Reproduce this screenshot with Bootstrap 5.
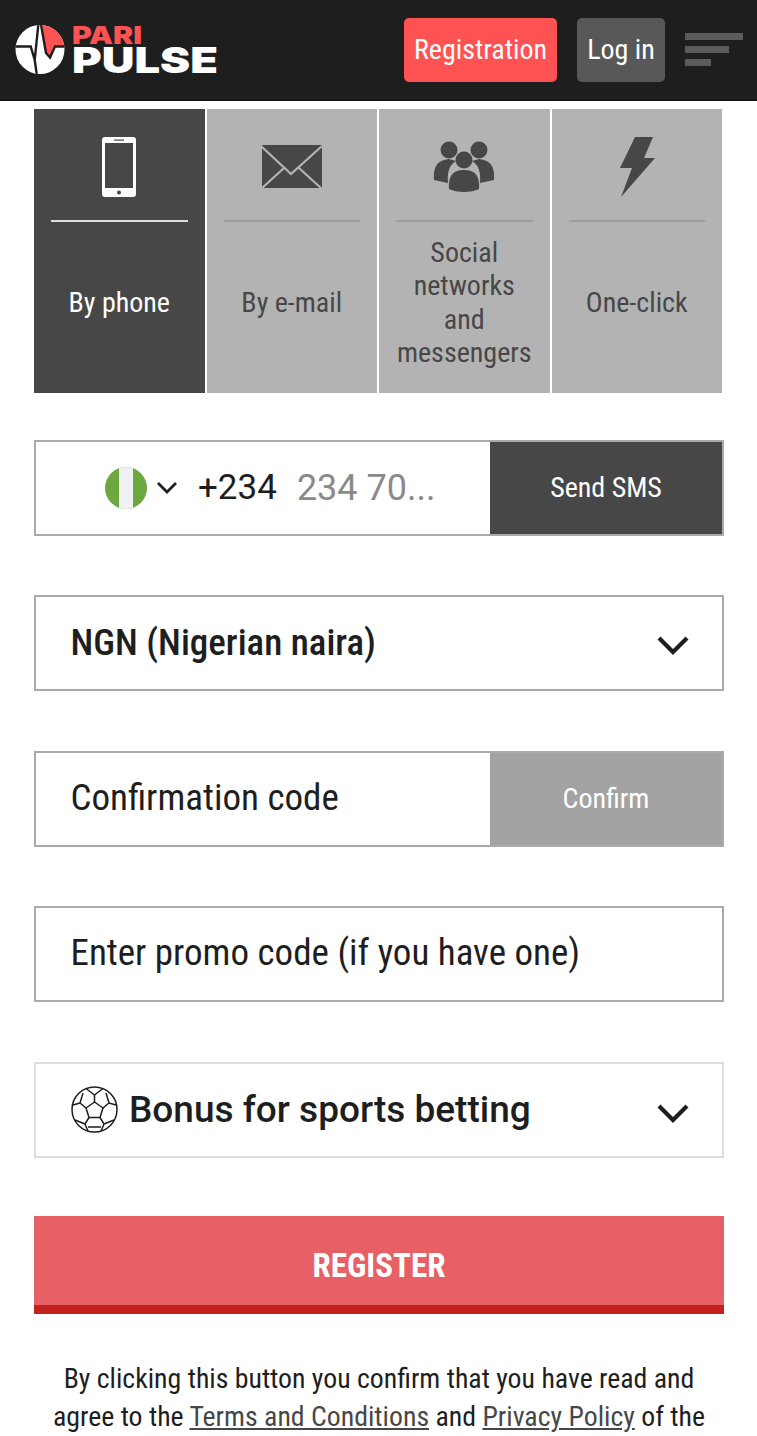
<!DOCTYPE html>
<html lang="en">
<head>
    <meta charset="UTF-8">
    <meta name="viewport" content="width=device-width, initial-scale=1.0">
    <title>PariPulse registration</title>
    <link href="https://cdn.jsdelivr.net/npm/bootstrap@5.3.0/dist/css/bootstrap.min.css" rel="stylesheet">
    <style>
        html, body {
            height: 1436px;
            overflow: hidden;
        }
        body {
            font-family: Roboto, "Liberation Sans", sans-serif;
            font-stretch: 75%;
            color: #1e1e1e;
            background: #fff;
        }
        button { font-stretch: 75%; }
        .top-bar {
            height: 101px;
            background: #1e1e1e;
            border-bottom: 2px solid #151515;
            padding: 0 14px 0 14px;
        }
        .btn-reg, .btn-login {
            height: 64px;
            border-radius: 5px;
            color: #fff;
            font-size: 28px;
            padding: 0;
            border: 0;
        }
        .btn-reg { width: 153px; background: #ff5252; }
        .btn-login { width: 88px; background: #585858; margin-left: 20px; }
        .btn-reg:hover { background: #ff5252; color: #fff; }
        .btn-login:hover { background: #585858; color: #fff; }
        .burger { width: 58px; margin: 0 0 0 20px; gap: 6px; }
        .burger span { display: block; height: 7px; background: #5b5b5b; }
        .burger .short-bar { width: 26px; }
        .reg-form { padding: 8px 33px 0 34px; }
        .tabs { gap: 2px; height: 284px; margin-right: 2px; }
        .tab-item {
            flex: 1 1 0;
            background: #b3b3b3;
            color: #474747;
            padding: 0 17px;
            font-size: 28px;
            line-height: 33.5px;
        }
        .tab-item.active-tab { background: #474747; color: #fff; }
        .tab-icon {
            height: 113px;
            padding-top: 5px;
            border-bottom: 2px solid #9c9c9c;
            flex: none;
        }
        .active-tab .tab-icon { border-bottom-color: #ddd; }
        .tab-label { flex: 1; padding-bottom: 10px; }
        .field {
            height: 96px;
            border: 2px solid #aaa;
            margin-top: 59.3px;
            font-size: 37px;
        }
        .field-text { padding-left: 34.5px; flex: 1; padding-bottom: 2px; }
        .field-btn {
            width: 232px;
            height: 100%;
            color: #fff;
            font-size: 28px;
            border-radius: 0;
            border: 0;
        }
        .dark-btn, .dark-btn:hover { background: #474747; color: #fff; }
        .gray-btn, .gray-btn:hover { background: #a3a3a3; color: #fff; }
        .phone-field { margin-top: 47px; }
        .phone-left { flex: 1; padding-left: 69px; }
        .flag { width: 42px; height: 42px; flex: none; }
        .dial { font-size: 35px; margin-left: 19px; font-stretch: 100%; }
        .phone-hint { font-size: 36px; color: #8a8a8a; margin-left: 20px; font-stretch: 100%; }
        .chev-big { margin-right: 33px; margin-top: 4px; }
        .strong-text { font-weight: 500; }
        .bonus-field { border-color: #ddd; font-weight: 500; font-stretch: 100%; margin-top: 60px; }
        .bonus-field .field-text { padding-left: 35px; gap: 11px; padding-bottom: 0; }
        .bonus-field .chev-big { margin-top: 7px; }
        .btn-register {
            display: block;
            width: 100%;
            height: 98px;
            margin-top: 58px;
            padding-top: 11px;
            background: #e66065;
            border: 0;
            border-bottom: 9px solid #c4201c;
            border-radius: 0;
            color: #fff;
            font-size: 33px;
            font-weight: 700;
        }
        .legal {
            margin: 46px 0 0;
            text-align: center;
            font-size: 27.8px;
            line-height: 38px;
        }
        .legal a { color: #474747; }
    </style>
</head>
<body>
    <!-- Header -->
    <nav class="top-bar d-flex align-items-center">
        <svg width="210" height="66" viewBox="0 -3 210 66" class="flex-shrink-0">
            <defs><clipPath id="logoClip"><circle cx="26" cy="29.5" r="24.5"/></clipPath></defs>
            <g clip-path="url(#logoClip)">
                <rect width="52" height="60" fill="#fff"/>
                <path d="M27 0 H60 V26.5 H41 L36 37.5 L32 33 Z" fill="#ff5252"/>
                <path d="M0 26.5 H16.7 L20.7 40 L24.5 3 M20.7 40 L23 56" fill="none" stroke="#1e1e1e" stroke-width="2.4"/>
                <path d="M26.7 3 L32 33 L36 37.5 L41 26.5 H60" fill="none" stroke="#1e1e1e" stroke-width="2.4"/>
            </g>
            <text x="58" y="24" font-family="Inter, sans-serif" font-weight="900" font-size="24" fill="#ff5252" textLength="70" lengthAdjust="spacingAndGlyphs">PARI</text>
            <text x="58" y="53" font-family="Inter, sans-serif" font-weight="900" font-size="36" fill="#fff" textLength="146" lengthAdjust="spacingAndGlyphs">PULSE</text>
        </svg>
        <div class="ms-auto d-flex align-items-center">
            <button class="btn btn-reg">Registration</button>
            <button class="btn btn-login">Log in</button>
            <div class="burger d-flex flex-column">
                <span class="w-100"></span>
                <span class="w-75"></span>
                <span class="short-bar"></span>
            </div>
        </div>
    </nav>

    <div class="reg-form">
        <!-- Registration types -->
        <div class="tabs d-flex">
            <div class="tab-item active-tab d-flex flex-column text-center">
                <div class="tab-icon d-flex align-items-center justify-content-center">
                    <svg width="36" height="62" viewBox="0 0 36 62">
                        <rect x="1" y="1" width="34" height="60" rx="3" fill="#fff"/>
                        <rect x="4" y="7" width="28" height="45" fill="#474747"/>
                        <rect x="13" y="3.5" width="10" height="1.2" fill="#474747"/>
                        <circle cx="18" cy="56.5" r="2" fill="#474747"/>
                    </svg>
                </div>
                <div class="tab-label d-flex align-items-center justify-content-center">By phone</div>
            </div>
            <div class="tab-item d-flex flex-column text-center">
                <div class="tab-icon d-flex align-items-center justify-content-center">
                    <svg width="62" height="46" viewBox="0 0 62 46">
                        <rect x="1" y="1" width="60" height="43" fill="#474747"/>
                        <path d="M0 2 L30 30 L61 2 M0 45 L23 24 M61 45 L38 24" fill="none" stroke="#b3b3b3" stroke-width="2.2"/>
                    </svg>
                </div>
                <div class="tab-label d-flex align-items-center justify-content-center">By e-mail</div>
            </div>
            <div class="tab-item d-flex flex-column text-center">
                <div class="tab-icon d-flex align-items-center justify-content-center">
                    <svg width="62" height="52" viewBox="0 0 62 52">
                        <circle cx="16" cy="9" r="8.5" fill="#474747"/>
                        <circle cx="46" cy="9" r="8.5" fill="#474747"/>
                        <path d="M1 39 C0 26 4 19 16 18 L23 20 C16 24 14 32 15 42Z" fill="#474747"/>
                        <path d="M61 39 C62 26 58 19 46 18 L39 20 C46 24 48 32 47 42Z" fill="#474747"/>
                        <circle cx="31" cy="19" r="8.5" fill="#474747"/>
                        <path d="M16 48 C15 36 19 29 31 29 C43 29 47 36 46 48 C38 52 24 52 16 48Z" fill="#474747"/>
                    </svg>
                </div>
                <div class="tab-label d-flex align-items-center justify-content-center">Social networks and messengers</div>
            </div>
            <div class="tab-item d-flex flex-column text-center">
                <div class="tab-icon d-flex align-items-center justify-content-center">
                    <svg width="36" height="62" viewBox="0 0 36 62">
                        <path d="M16 1 H34 L25 22 H36 L2 61 L13 32 H1Z" fill="#474747"/>
                    </svg>
                </div>
                <div class="tab-label d-flex align-items-center justify-content-center">One-click</div>
            </div>
        </div>

        <!-- Phone -->
        <div class="field phone-field d-flex align-items-center">
            <div class="phone-left d-flex align-items-center">
                <svg class="flag" viewBox="0 0 42 42">
                    <defs><clipPath id="flagClip"><circle cx="21" cy="21" r="21"/></clipPath></defs>
                    <g clip-path="url(#flagClip)">
                        <rect width="42" height="42" fill="#6ca83f"/>
                        <rect x="14" width="14" height="42" fill="#eff1f3"/>
                    </g>
                </svg>
                <svg width="24" height="14" viewBox="0 0 24 14" class="ms-2 flex-shrink-0">
                    <path d="M3 2 L12 11 L21 2" fill="none" stroke="#1e1e1e" stroke-width="2.8"/>
                </svg>
                <span class="dial">+234</span>
                <span class="phone-hint">234 70...</span>
            </div>
            <button class="btn field-btn dark-btn">Send SMS</button>
        </div>

        <!-- Currency -->
        <div class="field d-flex align-items-center">
            <div class="field-text strong-text">NGN (Nigerian naira)</div>
            <svg width="32" height="20" viewBox="0 0 32 20" class="chev-big">
                <path d="M2 3 L16 17 L30 3" fill="none" stroke="#1e1e1e" stroke-width="4.2"/>
            </svg>
        </div>

        <!-- Confirmation code -->
        <div class="field d-flex align-items-center">
            <div class="field-text">Confirmation code</div>
            <button class="btn field-btn gray-btn">Confirm</button>
        </div>

        <!-- Promo code -->
        <div class="field d-flex align-items-center">
            <div class="field-text">Enter promo code (if you have one)</div>
        </div>

        <!-- Bonus -->
        <div class="field bonus-field d-flex align-items-center">
            <div class="field-text d-flex align-items-center">
                <svg width="47" height="47" viewBox="0 0 47 47" class="flex-shrink-0">
                    <g fill="none" stroke="#1e1e1e" stroke-width="1.5" stroke-linejoin="round">
                        <circle cx="23.5" cy="23.5" r="22.5"/>
                        <path d="M23.5 16 L32 22 L29 31.5 H18 L15 22Z"/>
                        <path d="M23.5 16 V9 M32 22 L38 17 M29 31.5 L33 38 M18 31.5 L14 38 M15 22 L9 17"/>
                        <path d="M15 2.5 L23.5 9 L32 2.5 M38 17 L35 7 M38 17 L45 19 M9 17 L12 7 M9 17 L2 19 M14 38 L4 34 M14 38 L17 45 M33 38 L43 34 M33 38 L30 45 M17 41 H30"/>
                    </g>
                </svg>
                Bonus for sports betting
            </div>
            <svg width="32" height="20" viewBox="0 0 32 20" class="chev-big">
                <path d="M2 3 L16 17 L30 3" fill="none" stroke="#1e1e1e" stroke-width="4.2"/>
            </svg>
        </div>

        <button class="btn-register">REGISTER</button>

        <p class="legal">By clicking this button you confirm that you have read and<br>agree to the <a href="#">Terms and Conditions</a> and <a href="#">Privacy Policy</a> of the</p>
    </div>

    <script src="https://cdn.jsdelivr.net/npm/bootstrap@5.3.0/dist/js/bootstrap.bundle.min.js"></script>
</body>
</html>
